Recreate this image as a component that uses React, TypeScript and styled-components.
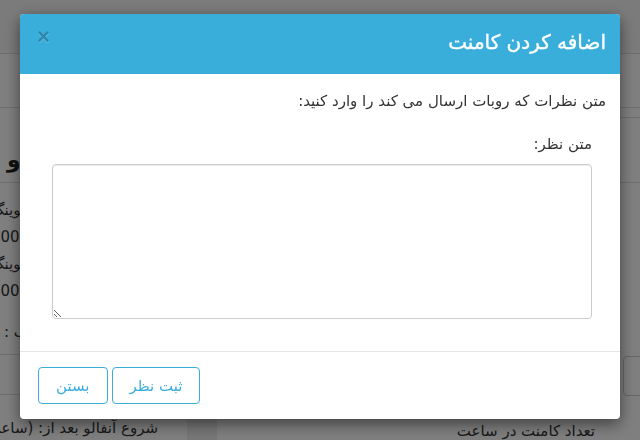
import React from "react";
import styled, { createGlobalStyle } from "styled-components";

const GlobalStyle = createGlobalStyle`
  html, body {
    margin: 0;
    padding: 0;
    width: 640px;
    height: 440px;
    overflow: hidden;
    background: #fff;
  }
  body {
    font-family: "DejaVu Sans", "Noto Sans", sans-serif;
    direction: rtl;
  }
  * { box-sizing: border-box; }
`;

/* ---------- page behind the modal ---------- */

const Page = styled.div`
  width: 640px;
  height: 440px;
  overflow: hidden;
  background: #fff;
  color: #333;
  font-size: 15px;
`;

const Navbar = styled.header`
  height: 54px;
  background: #f6f6f6;
  border-bottom: 1px solid #ddd;
`;

const Toolbar = styled.div`
  height: 54px;
  border-bottom: 1px solid #ddd;
`;

const Main = styled.div`
  display: grid;
  grid-template-columns: 423px 30px 187px;
  height: 340px;
`;

const Column = styled.section<{ $side: "right" | "left" }>`
  display: flex;
  flex-direction: column;
  min-width: 0;
  padding-top: ${(p) => (p.$side === "right" ? "9px" : "0")};
`;

const Gutter = styled.div`
  background: #eee;
`;

const ColHeading = styled.div<{ $bordered?: boolean }>`
  height: ${(p) => (p.$bordered ? "66px" : "75px")};
  border-top: ${(p) => (p.$bordered ? "1px solid #ddd" : "0")};
  border-bottom: 1px solid #ddd;
  display: flex;
  align-items: flex-end;
  justify-content: flex-end;
  padding: 0 7px 10px;
  font-size: 22px;
  font-weight: bold;
  color: #222;
  white-space: nowrap;
`;

const StatList = styled.div`
  padding-top: 14px;
  display: flex;
  flex-direction: column;
`;

const StatLine = styled.div`
  line-height: 27px;
  height: 27px;
  text-align: left;
  white-space: nowrap;
  margin-left: -9px;
`;

const FieldCaption = styled.div`
  margin-top: 14px;
  height: 27px;
  line-height: 27px;
  text-align: left;
  padding-left: 4px;
  white-space: nowrap;
`;

const InputBand = styled.div`
  margin-top: 8px;
  height: 41px;
  border-top: 1px solid #ddd;
  border-bottom: 1px solid #ddd;
`;

const SideInput = styled.div`
  margin-top: 173px;
  width: 40px;
  height: 40px;
  border: 1px solid #ccc;
  border-radius: 4px;
  margin-right: -23px;
  background: #fff;
`;

const BottomText = styled.div<{ $pad: number; $top: number }>`
  margin-top: ${(p) => p.$top}px;
  padding-right: ${(p) => p.$pad}px;
  white-space: nowrap;
  line-height: 20px;
`;

/* ---------- modal ---------- */

const Backdrop = styled.div`
  position: fixed;
  inset: 0;
  background: rgba(0, 0, 0, 0.5);
`;

const ModalLayer = styled.div`
  position: fixed;
  inset: 0;
`;

const Dialog = styled.div`
  width: 600px;
  margin: 14px auto 0;
  background: #fff;
  border-radius: 4px;
  box-shadow: 0 5px 15px rgba(0, 0, 0, 0.5);
  overflow: hidden;
  direction: rtl;
  color: #333;
`;

const Header = styled.div`
  height: 60px;
  background: #3aaedb;
  padding: 0 14px 0 17px;
  display: flex;
  align-items: center;
  justify-content: space-between;
`;

const Title = styled.h4`
  margin: -4px 0 0;
  font-size: 20px;
  font-weight: normal;
  line-height: 1;
  color: #fff;
  -webkit-text-stroke: 0.35px #fff;
`;

const Close = styled.button`
  margin: -15px 0 0;
  padding: 0;
  border: 0;
  background: none;
  font-family: "Liberation Sans", Arial, sans-serif;
  font-size: 22px;
  font-weight: bold;
  line-height: 1;
  color: #000;
  opacity: 0.22;
  text-shadow: 0 1px 0 #fff;
  cursor: pointer;
`;

const Body = styled.div`
  padding: 16px 14px 32px 14px;
`;

const Intro = styled.p`
  margin: 0 0 21px;
  font-size: 15px;
  line-height: 22px;
`;

const FormGroup = styled.div`
  padding: 0 14px 0 18px;
  display: flex;
  flex-direction: column;
`;

const Label = styled.label`
  font-size: 15px;
  line-height: 22px;
  margin-bottom: 9px;
`;

const TextArea = styled.textarea`
  height: 155px;
  width: 100%;
  border: 1px solid #ccc;
  border-radius: 4px;
  box-shadow: inset 0 1px 1px rgba(0, 0, 0, 0.075);
  font-family: inherit;
  font-size: 15px;
  padding: 6px 12px;
  direction: rtl;
  resize: vertical;
`;

const Footer = styled.div`
  border-top: 1px solid #e5e5e5;
  padding: 15px 18px;
  display: flex;
  justify-content: flex-end;
  gap: 4px;
`;

const Button = styled.button`
  height: 37px;
  padding: 0 17px;
  border: 1px solid #3aaedb;
  border-radius: 4px;
  background: #fff;
  color: #3aaedb;
  font-family: inherit;
  font-size: 15px;
  cursor: pointer;
`;

export default function App() {
  return (
    <>
      <GlobalStyle />
      <Page>
        <Navbar />
        <Toolbar />
        <Main>
          <Column $side="right">
            <ColHeading $bordered />
            <SideInput />
            <BottomText $pad={45} $top={25}>تعداد کامنت در ساعت</BottomText>
          </Column>
          <Gutter />
          <Column $side="left">
            <ColHeading>تنظیمات فالو و</ColHeading>
            <StatList>
              <StatLine>حداکثر فالوینگ</StatLine>
              <StatLine>10000</StatLine>
              <StatLine>حداقل فالوینگ</StatLine>
              <StatLine>5000</StatLine>
            </StatList>
            <FieldCaption>نوع حساب :</FieldCaption>
            <InputBand />
            <BottomText $pad={29} $top={23}>شروع آنفالو بعد از: (ساعت)</BottomText>
          </Column>
        </Main>
      </Page>
      <Backdrop />
      <ModalLayer>
        <Dialog>
          <Header>
            <Title>اضافه کردن کامنت</Title>
            <Close aria-label="بستن">×</Close>
          </Header>
          <Body>
            <Intro>متن نظرات که روبات ارسال می کند را وارد کنید:</Intro>
            <FormGroup>
              <Label>متن نظر:</Label>
              <TextArea />
            </FormGroup>
          </Body>
          <Footer>
            <Button>ثبت نظر</Button>
            <Button>بستن</Button>
          </Footer>
        </Dialog>
      </ModalLayer>
    </>
  );
}
